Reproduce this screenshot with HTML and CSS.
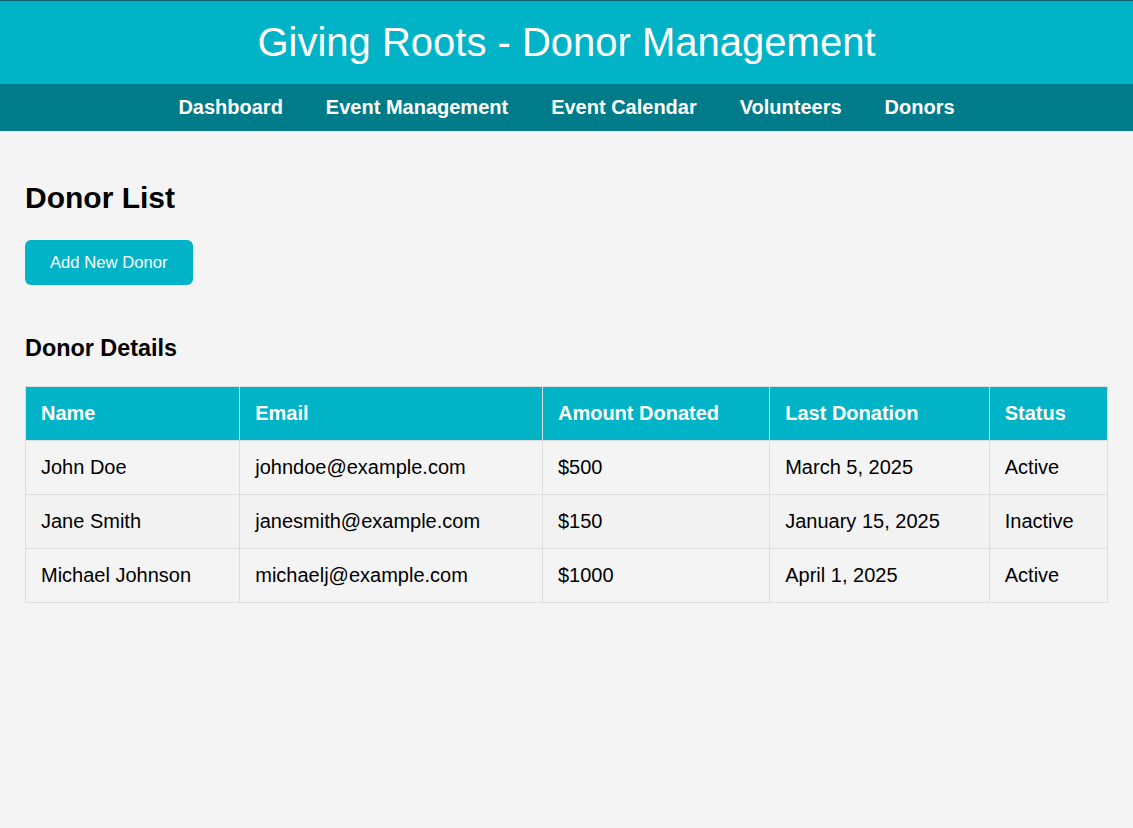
FILE: index.html
```html
<!DOCTYPE html>
<html lang="en">
<head>
<meta charset="utf-8">
<title>Giving Roots - Donor Management</title>
<link rel="stylesheet" href="styles.css">
</head>
<body>
<header class="site-header">
  <h1 class="site-title">Giving Roots - Donor Management</h1>
</header>
<nav class="main-nav">
  <a href="#">Dashboard</a>
  <a href="#">Event Management</a>
  <a href="#">Event Calendar</a>
  <a href="#">Volunteers</a>
  <a href="#">Donors</a>
</nav>
<main class="content">
  <h2 class="page-title">Donor List</h2>
  <div class="actions">
    <button class="btn" type="button">Add New Donor</button>
  </div>
  <h3 class="section-title">Donor Details</h3>
  <table class="donor-table">
    <thead>
      <tr>
        <th>Name</th>
        <th>Email</th>
        <th>Amount Donated</th>
        <th>Last Donation</th>
        <th>Status</th>
      </tr>
    </thead>
    <tbody>
      <tr>
        <td>John Doe</td>
        <td>johndoe@example.com</td>
        <td>$500</td>
        <td>March 5, 2025</td>
        <td>Active</td>
      </tr>
      <tr>
        <td>Jane Smith</td>
        <td>janesmith@example.com</td>
        <td>$150</td>
        <td>January 15, 2025</td>
        <td>Inactive</td>
      </tr>
      <tr>
        <td>Michael Johnson</td>
        <td>michaelj@example.com</td>
        <td>$1000</td>
        <td>April 1, 2025</td>
        <td>Active</td>
      </tr>
    </tbody>
  </table>
</main>
</body>
</html>
```

FILE: styles.css
```css
html, body {
  margin: 0;
  padding: 0;
}

body {
  background: #f4f4f4;
  font-family: "Liberation Sans", Arial, sans-serif;
  font-size: 20px;
  color: #000;
}

.site-header {
  background: #00b3c6;
  border-top: 1px solid #17606e;
  height: 83px;
  display: flex;
  align-items: center;
  justify-content: center;
}

.site-title {
  margin: 0;
  font-size: 40px;
  font-weight: normal;
  color: #fff;
  line-height: 46px;
  position: relative;
  top: -1px;
}

.main-nav {
  background: #007b8a;
  height: 47px;
  display: flex;
  align-items: center;
  justify-content: center;
  gap: 43px;
}

.main-nav a {
  color: #fff;
  font-weight: bold;
  font-size: 20px;
  text-decoration: none;
  line-height: 23px;
}

.content {
  padding: 50px 25px 25px;
}

.page-title {
  margin: 0;
  font-size: 30px;
  line-height: 34px;
  font-weight: bold;
}

.actions {
  margin-top: 25px;
}

.btn {
  display: block;
  background: #00b3c6;
  color: #fff;
  border: none;
  border-radius: 6px;
  font-family: "Liberation Sans", Arial, sans-serif;
  font-size: 16.67px;
  height: 45px;
  padding: 0 25px;
  cursor: pointer;
}

.section-title {
  margin: 50px 0 24px;
  font-size: 23.4px;
  line-height: 27px;
  font-weight: bold;
}

.donor-table {
  width: 100%;
  border-collapse: collapse;
}

.donor-table th,
.donor-table td {
  border: 1px solid #dddddd;
  padding: 15px;
  text-align: left;
  font-size: 20px;
  line-height: 23px;
}

.donor-table th {
  background: #00b3c6;
  color: #fff;
  font-weight: bold;
}

.donor-table tbody tr:nth-child(even) td {
  background: #f2f2f2;
}
```
